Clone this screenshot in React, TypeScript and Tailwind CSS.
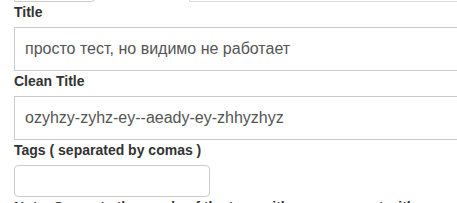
import React from 'react';

const labelCls = 'block text-[14px] leading-[20px] font-bold text-[#333] mb-[5px]';
const wideInput =
  'block w-[520px] h-[44px] px-[10px] border border-[#ccc] text-[16px] text-[#555] bg-white outline-none';

export default function App() {
  return (
    <div
      className="w-[457px] h-[203px] overflow-hidden bg-white pl-[14px]"
      style={{ fontFamily: '"Liberation Sans", Arial, sans-serif' }}
    >
      {/* bottom edges of the row above */}
      <div className="flex items-end h-[2px] overflow-hidden">
        <div className="w-[81px] h-[10px] border border-t-0 border-[#ccc] rounded-br-[4px] shrink-0" />
        <div className="ml-[94px] w-[300px] h-[10px] border-b border-l border-[#ddd] shrink-0" />
      </div>

      <label className={labelCls}>Title</label>
      <input className={wideInput} defaultValue="просто тест, но видимо не работает" readOnly />

      <label className={labelCls}>Clean Title</label>
      <input className={wideInput} defaultValue="ozyhzy-zyhz-ey--aeady-ey-zhhyzhyz" readOnly />

      <label className={labelCls}>Tags ( separated by comas )</label>
      <input
        className="block w-[196px] h-[32px] px-[10px] border border-[#ccc] rounded-[4px] text-[14px] text-[#555] bg-white outline-none"
        readOnly
      />

      <p className="text-[14px] leading-[20px] font-bold text-[#333] whitespace-nowrap">
        Note: Separate the words of the tags with a comma, not with spaces only
      </p>
    </div>
  );
}
